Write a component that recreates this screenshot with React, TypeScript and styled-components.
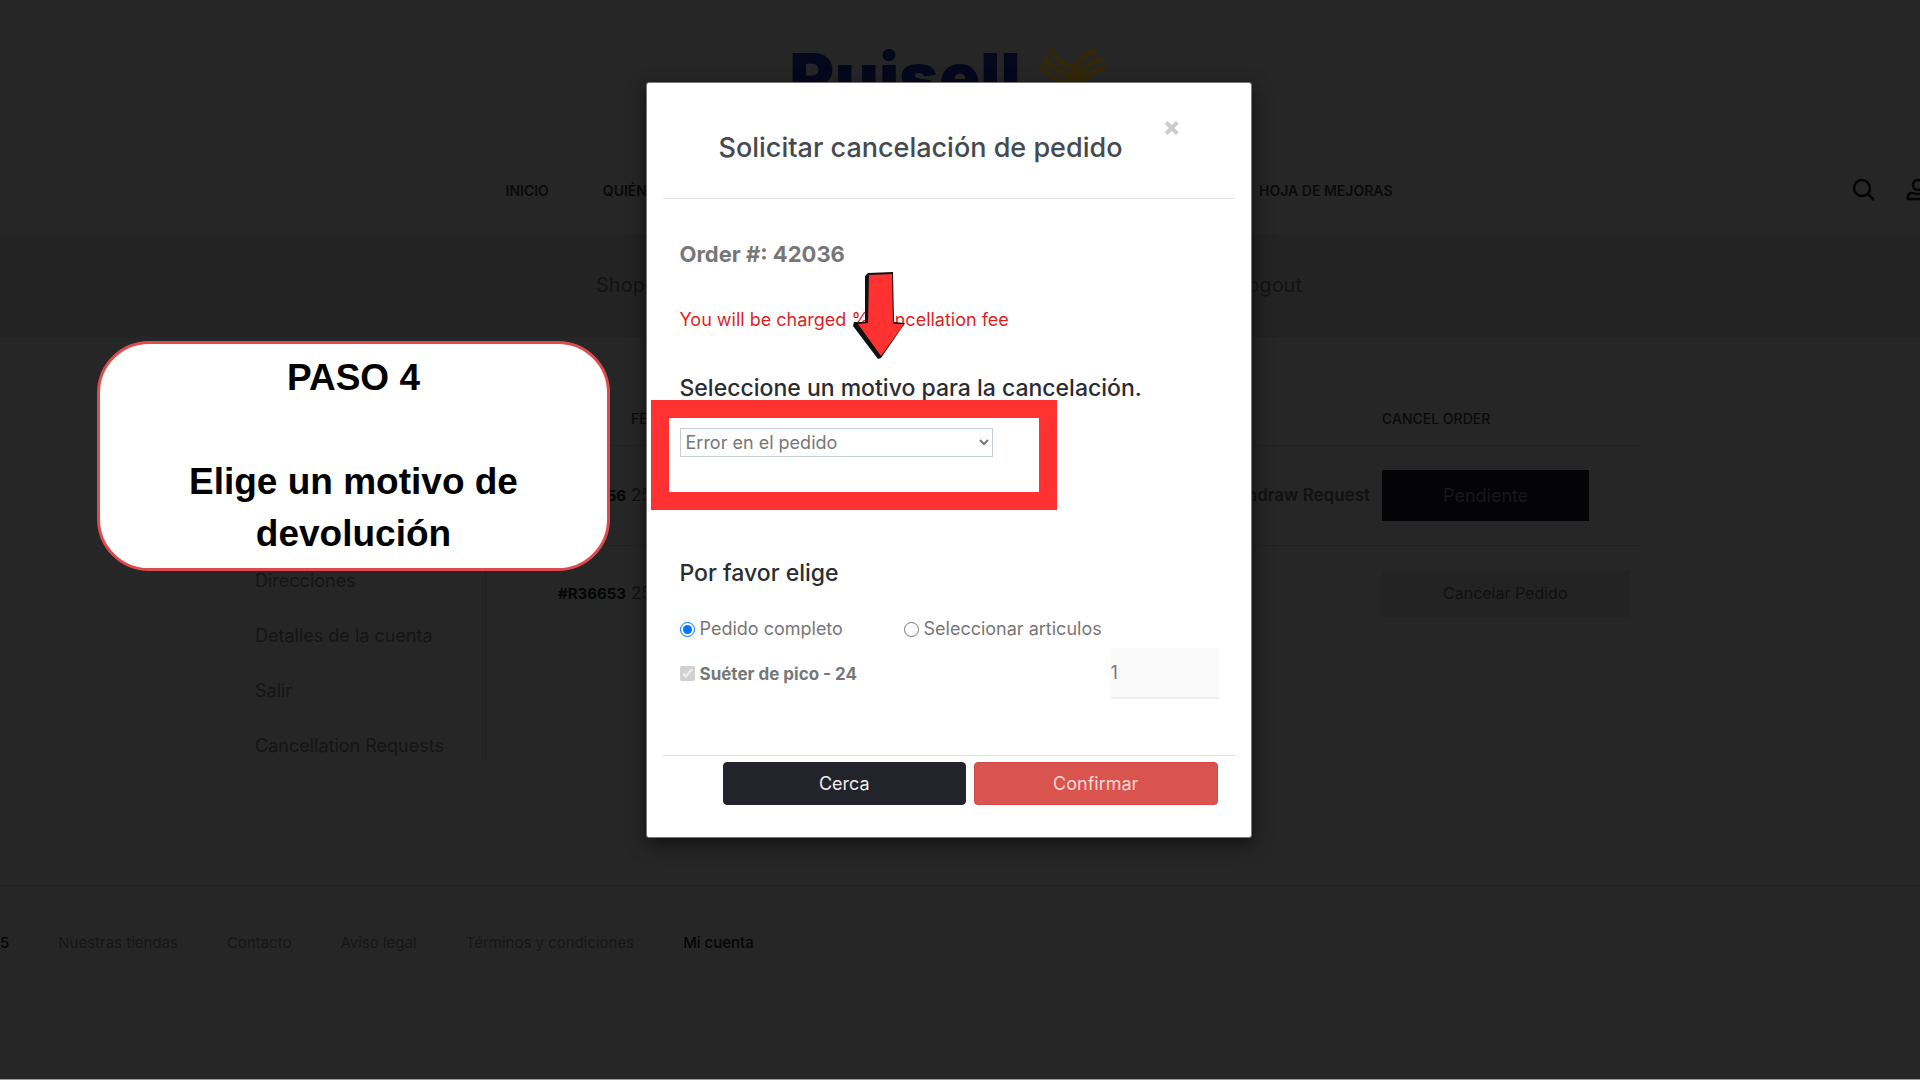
import React from "react";
import styled, { createGlobalStyle } from "styled-components";

const GlobalStyle = createGlobalStyle`
  *, *::before, *::after { box-sizing: border-box; }
  body { margin: 0; background: #262626; font-family: Inter, "Open Sans", sans-serif; }
  a { color: inherit; text-decoration: none; }
  h2, h3, p, ul { margin: 0; padding: 0; }
  ul { list-style: none; }
  button, input, select { font-family: inherit; }
`;

const Page = styled.div`
  position: relative;
  display: flex;
  flex-direction: column;
  min-height: 100vh;
  overflow: hidden;
  border-bottom: 1px solid #999;
  background: #262626;
  color: #0a0a0a;
`;

const Header = styled.header`
  display: grid;
  grid-template-columns: 1fr 887px 1fr 22px;
  grid-template-rows: 146px 88px;
  align-items: center;
`;

const Brand = styled.a`
  grid-column: 2;
  display: flex;
  justify-content: center;
  align-items: center;
  gap: 18px;
  padding-top: 8px;
  color: #05081c;
  font-size: 68px;
  font-weight: 900;
  line-height: 64px;
`;

const Nav = styled.nav`
  grid-column: 2;
  display: flex;
  gap: 54px;
  font-size: 14px;
  font-weight: 600;
  white-space: nowrap;

  a:last-child { margin-left: auto; }
`;

const Tools = styled.div`
  grid-column: 3 / 5;
  display: flex;
  justify-content: flex-end;
  gap: 30px;
  margin-right: -10px;
`;

const IconButton = styled.button`
  display: flex;
  padding: 0;
  border: 0;
  background: none;
  color: #050505;
`;

const AccountBar = styled.nav`
  display: flex;
  justify-content: center;
  align-items: center;
  padding: 38px 22px 38px 0;
  background: #232323;
  color: #131313;
  font-size: 20px;
  line-height: 27px;
`;

const AccountLinks = styled.div`
  display: flex;
  justify-content: space-between;
  width: 706px;
`;

const Main = styled.main`
  flex: 1;
  display: grid;
  grid-template-columns: 231px minmax(0, 1fr);
  column-gap: 72px;
  align-items: start;
  padding: 56px 280px 40px 255px;
`;

const Sidebar = styled.ul`
  display: flex;
  flex-direction: column;
  gap: 25px;
  padding-top: 173px;
  border-right: 1px solid #202020;
  color: #151515;
  font-size: 18px;
  line-height: 30px;
`;

const Orders = styled.table`
  width: 100%;
  table-layout: fixed;
  border-collapse: collapse;
  text-align: left;
  font-size: 17px;

  th { height: 52px; padding: 0; font-size: 14px; font-weight: 500; }
  td { height: 100px; padding: 0; color: #111; white-space: nowrap; }
  tr { border-bottom: 1px solid #222; }
  tbody tr:last-child { border-bottom: 0; }
  tbody tr:last-child td { height: 96px; }
`;

const Col = styled.col<{ $w?: number }>`
  width: ${(p) => (p.$w ? `${p.$w}px` : "auto")};
`;

const OrderLink = styled.a`
  color: #050505;
  font-size: 15px;
  font-weight: 700;
`;

const RequestLink = styled.a`
  display: block;
  padding-right: 12px;
  text-align: right;
  font-weight: 600;
`;

const OrderButton = styled.button<{ $dark?: boolean }>`
  padding: 0 61px;
  border: 0;
  background: ${(p) => (p.$dark ? "#040406" : "#232323")};
  color: ${(p) => (p.$dark ? "#18181a" : "#101010")};
  font-size: ${(p) => (p.$dark ? 18 : 16)}px;
  line-height: ${(p) => (p.$dark ? 51 : 47)}px;
`;

const Footer = styled.footer`
  display: flex;
  gap: 49px;
  padding: 46px 0 125px;
  border-top: 1px solid #222;
  color: #161616;
  font-size: 15px;
  line-height: 22px;
`;

const Current = styled.a`
  color: #050505;
  font-weight: 500;
`;

const Overlay = styled.div`
  position: absolute;
  inset: 0;
  display: flex;
  justify-content: center;
  align-items: flex-start;
  padding: 82px 23px 0 0;
`;

const Dialog = styled.form`
  position: relative;
  width: 606px;
  padding: 0 16px 32px;
  border: 1px solid #777;
  border-radius: 3px;
  background: #fff;
  box-shadow: 0 6px 18px rgba(0, 0, 0, 0.55);
  color: #777;
  font-size: 18px;
`;

const DialogHeader = styled.div`
  display: flex;
  align-items: flex-start;
  padding: 29px 54px 32px 56px;
  border-bottom: 1px solid #e2e2e2;
`;

const Title = styled.h2`
  flex: 1;
  padding-top: 18px;
  color: #444a50;
  font-size: 27px;
  font-weight: 500;
  line-height: 36px;
`;

const Close = styled.button`
  padding: 0;
  border: 0;
  background: none;
  color: #ccc;
  font-size: 26px;
  font-weight: 800;
  line-height: 30px;
`;

const DialogBody = styled.div`
  padding: 39px 16px 56px 17px;
`;

const OrderNumber = styled.h3`
  margin-bottom: 38px;
  font-size: 22px;
  font-weight: 700;
  line-height: 32px;
`;

const Fee = styled.p`
  margin-bottom: 40px;
  color: #df1f1f;
  line-height: 24px;
`;

const SectionTitle = styled.label`
  display: block;
  color: #2b2c33;
  font-size: 23px;
  font-weight: 500;
  line-height: 32px;
`;

const Reason = styled.select`
  display: block;
  width: 313px;
  height: 29px;
  margin: 24px 0 100px;
  padding: 0 1px;
  border: 1px solid #c3cdd2;
  border-radius: 0;
  background: #fff;
  color: #777;
  font-size: 18px;
`;

const Options = styled.div`
  display: grid;
  grid-template-columns: 224px 1fr;
  margin-top: 28px;
`;

const Choice = styled.label<{ $bold?: boolean }>`
  display: flex;
  align-items: center;
  gap: 5px;
  font-size: ${(p) => (p.$bold ? 17 : 18)}px;
  font-weight: ${(p) => (p.$bold ? 700 : 400)};
  line-height: 24px;

  input { width: 15px; height: 15px; margin: 0; }
`;

const ItemRow = styled.div`
  display: flex;
  justify-content: space-between;
  align-items: center;
  margin-top: 7px;
`;

const Quantity = styled.input`
  width: 108px;
  height: 51px;
  padding: 0;
  border: 0;
  border-bottom: 2px solid #eee;
  background: #fafafa;
  color: #777;
  font-size: 18px;
`;

const DialogFooter = styled.div`
  display: flex;
  justify-content: flex-end;
  gap: 8px;
  padding: 6px 17px 0 60px;
  border-top: 1px solid #e0e0e0;
`;

const DialogButton = styled.button<{ $danger?: boolean }>`
  flex: 1;
  border: 1px solid ${(p) => (p.$danger ? "#d04a48" : "#23232c")};
  border-radius: 4px;
  background: ${(p) => (p.$danger ? "#d9534f" : "#23232c")};
  color: ${(p) => (p.$danger ? "#fbd9d8" : "#eee")};
  font-size: 18px;
  line-height: 39px;
`;

const Highlight = styled.div`
  position: absolute;
  left: 4px;
  top: 317px;
  width: 406px;
  height: 110px;
  border: 18px solid #ff3131;
  pointer-events: none;
`;

const Arrow = styled.svg`
  position: absolute;
  left: 206px;
  top: 189px;
`;

const Callout = styled.aside`
  position: absolute;
  left: 97px;
  top: 341px;
  width: 513px;
  padding: 8px 60px;
  border: 3px solid #dd4b4e;
  border-radius: 52px;
  background: #fff;
  color: #000;
  font-family: "Liberation Sans", Arial, sans-serif;
  font-size: 37px;
  font-weight: 700;
  line-height: 52px;
  text-align: center;

  p + p { margin-top: 52px; }
`;

const menu = ["Direcciones", "Detalles de la cuenta", "Salir", "Cancellation Requests"];

const footerLinks = ["Nuestras tiendas", "Contacto", "Aviso legal", "Términos y condiciones"];

export default function App() {
  return (
    <>
      <GlobalStyle />
      <Page>
        <Header>
          <Brand href="#">
            Ruisell
            <svg width="70" height="60" viewBox="0 0 70 60" fill="none" stroke="#33270a" strokeWidth="5">
              <path d="M11 1C15 13 26 19 42 22" />
              <path d="M5 9C11 22 23 27 42 29" />
              <path d="M2 18C9 31 22 36 42 37" />
              <path d="M34 24C39 13 46 6 58 4" />
              <path d="M40 31C45 20 53 13 65 12" />
              <path d="M45 37C50 27 58 21 69 20" />
              <path d="M24 35L36 21L50 29L56 56L36 44Z" fill="#33270a" stroke="none" />
            </svg>
          </Brand>
          <Nav>
            <a href="#">INICIO</a>
            <a href="#">QUIÉNES SOMOS</a>
            <a href="#">HOJA DE MEJORAS</a>
          </Nav>
          <Tools>
            <IconButton type="button" aria-label="Buscar">
              <svg width="24" height="24" viewBox="0 0 24 24" fill="none" stroke="currentColor" strokeWidth="2.500">
                <circle cx="10" cy="10" r="8" />
                <path d="M16 16L22 22" />
              </svg>
            </IconButton>
            <IconButton type="button" aria-label="Mi cuenta">
              <svg width="24" height="24" viewBox="0 0 24 24" fill="none" stroke="currentColor" strokeWidth="2.500">
                <circle cx="12" cy="7" r="5" />
                <path d="M2 21V19C2 16 4 15 6 15C8 15 9 16 12 16C15 16 16 15 18 15C20 15 22 16 22 19V21Z" />
              </svg>
            </IconButton>
          </Tools>
        </Header>
        <AccountBar>
          <AccountLinks>
            <a href="#">Shop</a>
            <a href="#">Logout</a>
          </AccountLinks>
        </AccountBar>
        <Main>
          <Sidebar>
            {menu.map((item) => (
              <li key={item}><a href="#">{item}</a></li>
            ))}
          </Sidebar>
          <Orders>
            <colgroup>
              <Col $w={73} />
              <Col />
              <Col $w={260} />
              <Col $w={258} />
            </colgroup>
            <thead>
              <tr>
                <th>PEDIDO</th>
                <th>FECHA</th>
                <th />
                <th>CANCEL ORDER</th>
              </tr>
            </thead>
            <tbody>
              <tr>
                <td><OrderLink href="#">#R36656</OrderLink></td>
                <td>25</td>
                <td><RequestLink href="#">Withdraw Request</RequestLink></td>
                <td><OrderButton type="button" $dark>Pendiente</OrderButton></td>
              </tr>
              <tr>
                <td><OrderLink href="#">#R36653</OrderLink></td>
                <td>25</td>
                <td />
                <td><OrderButton type="button">Cancelar Pedido</OrderButton></td>
              </tr>
            </tbody>
          </Orders>
        </Main>
        <Footer>
          <Current as="span">5</Current>
          {footerLinks.map((item) => (
            <a href="#" key={item}>{item}</a>
          ))}
          <Current href="#">Mi cuenta</Current>
        </Footer>

        <Overlay>
          <Dialog>
            <DialogHeader>
              <Title>Solicitar cancelación de pedido</Title>
              <Close type="button" aria-label="Cerrar">×</Close>
            </DialogHeader>
            <DialogBody>
              <OrderNumber>Order #: 42036</OrderNumber>
              <Fee>You will be charged % cancellation fee</Fee>
              <SectionTitle htmlFor="reason">Seleccione un motivo para la cancelación.</SectionTitle>
              <Reason id="reason">
                <option>Error en el pedido</option>
              </Reason>
              <SectionTitle as="h3">Por favor elige</SectionTitle>
              <Options>
                <Choice>
                  <input type="radio" name="scope" defaultChecked />
                  Pedido completo
                </Choice>
                <Choice>
                  <input type="radio" name="scope" />
                  Seleccionar articulos
                </Choice>
              </Options>
              <ItemRow>
                <Choice $bold>
                  <input type="checkbox" defaultChecked disabled />
                  Suéter de pico - 24
                </Choice>
                <Quantity type="text" aria-label="Cantidad" defaultValue="1" />
              </ItemRow>
            </DialogBody>
            <DialogFooter>
              <DialogButton type="button">Cerca</DialogButton>
              <DialogButton type="button" $danger>Confirmar</DialogButton>
            </DialogFooter>
            <Highlight />
            <Arrow width="54" height="88" viewBox="0 0 54 88" aria-hidden="true">
              <path d="M12 4L15 1L40 0L41 50L52 51L28 86L25 87L0 54L1 50L12 50Z" fill="#111" />
              <path d="M16 3L39 2L40 52L51 52L28 84L5 52L15 51Z" fill="#ff3131" />
            </Arrow>
          </Dialog>
        </Overlay>

        <Callout>
          <p>PASO 4</p>
          <p>Elige un motivo de devolución</p>
        </Callout>
      </Page>
    </>
  );
}
